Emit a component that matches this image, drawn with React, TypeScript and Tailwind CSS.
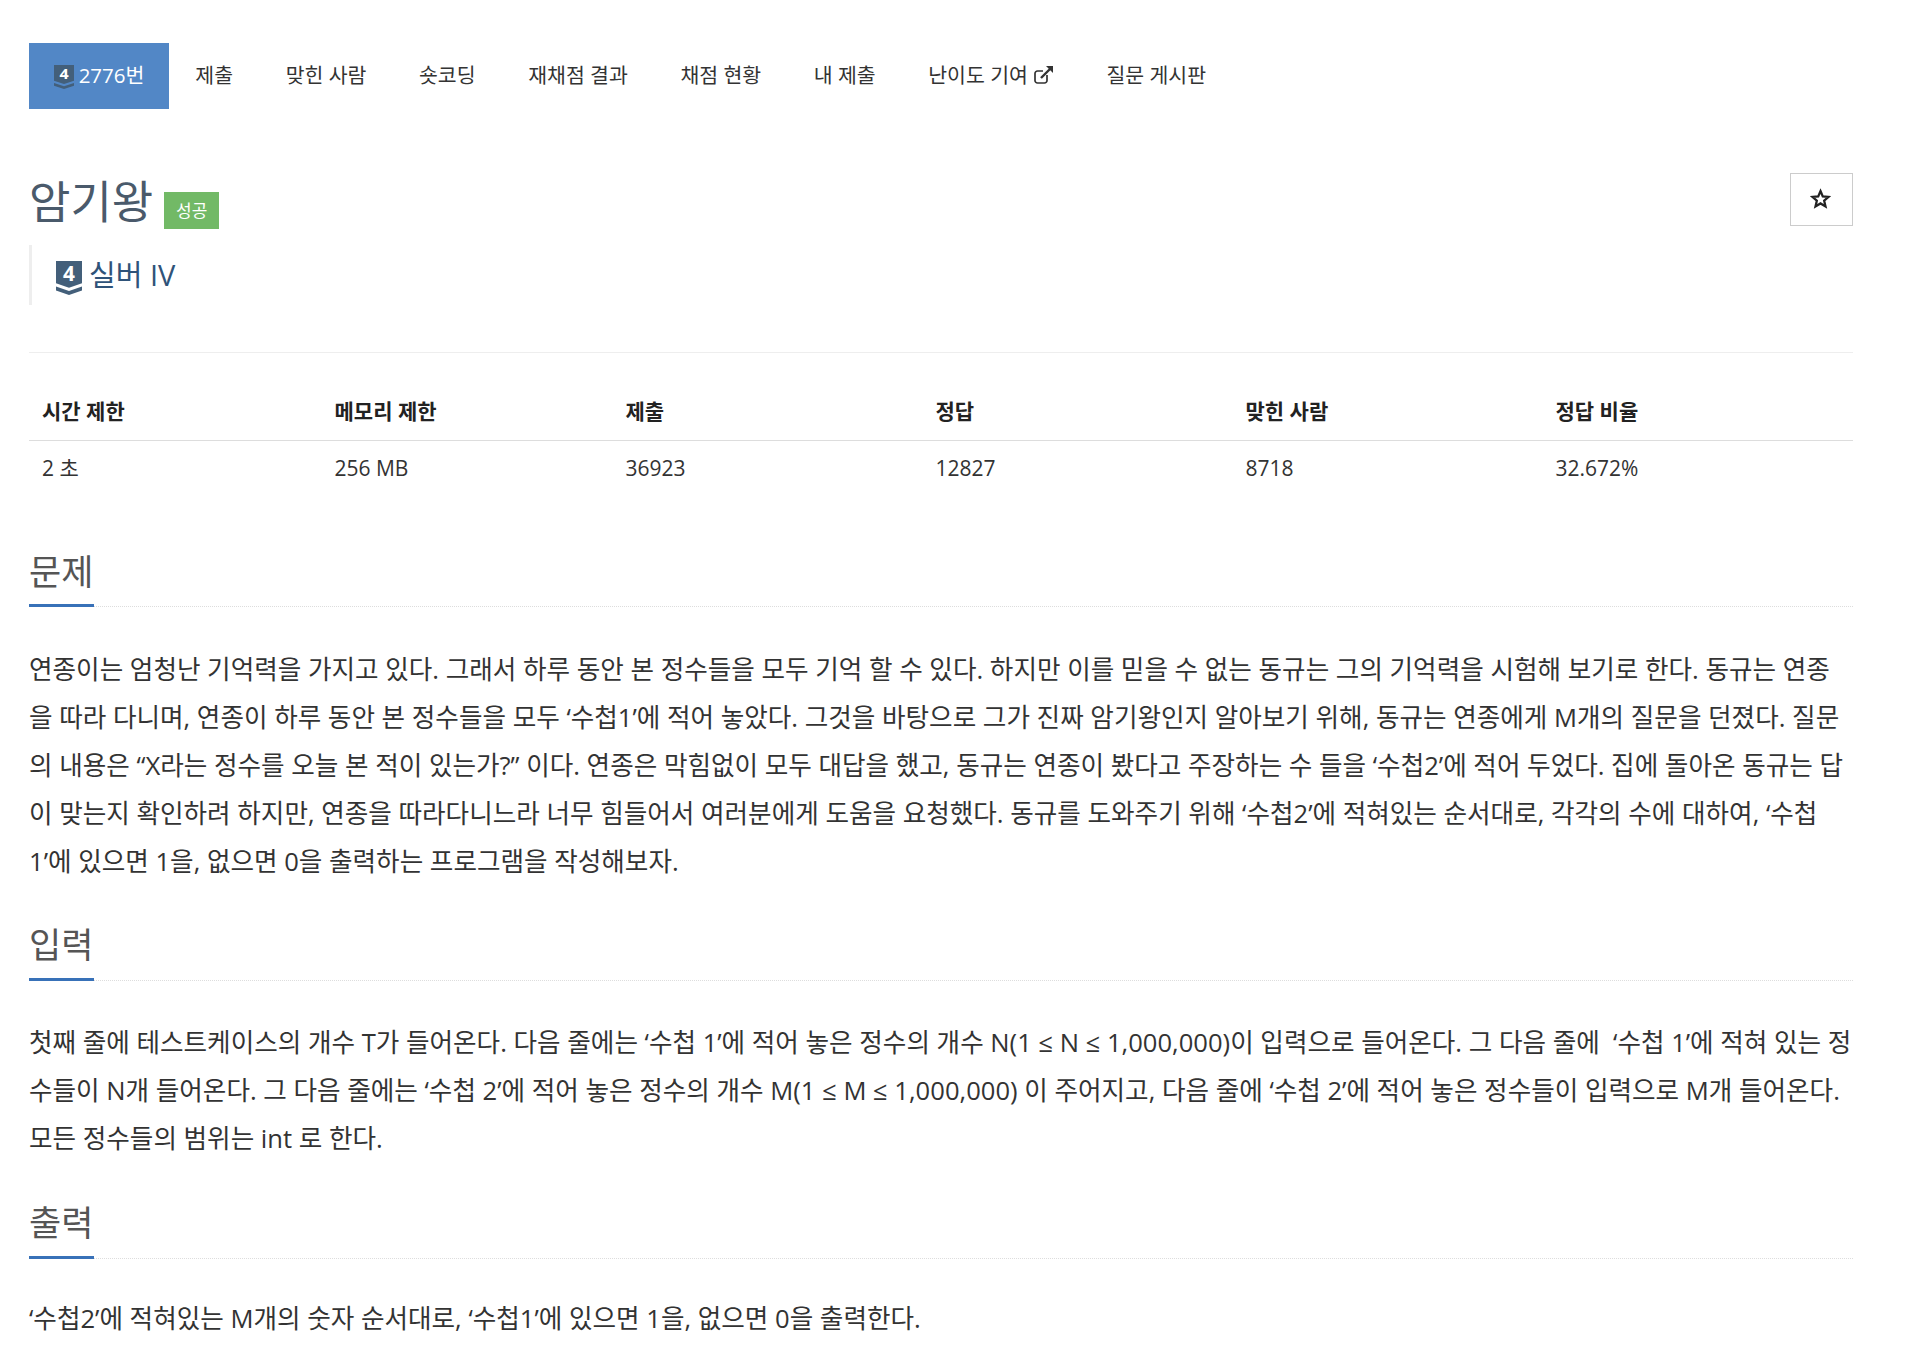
const font = { fontFamily: '"Open Sans","Noto Sans CJK KR",sans-serif' };

function Tier({ w, h, className }: { w: number; h: number; className?: string }) {
  return (
    <svg width={w} height={h} viewBox="0 0 20 26" preserveAspectRatio="none" overflow="visible" className={"shrink-0 " + (className ?? "")}>
      <path d="M0 0H20V17L10 20.5L0 17Z" fill="#435f7a" />
      <path d="M0 19.5L10 23L20 19.5V22.5L10 26L0 22.5Z" fill="#435f7a" />
      <text x="10" y="15.5" textAnchor="middle" fontSize="16" fontWeight="700" fill="#fff" fontFamily="Open Sans">4</text>
    </svg>
  );
}

const nav = ["제출", "맞힌 사람", "숏코딩", "재채점 결과", "채점 현황", "내 제출"];

function Section({ title, lines, headClass, bodyClass }: { title: string; lines: string[]; headClass: string; bodyClass: string }) {
  return (
    <section>
      <div className="h-[58px] border-b border-dotted border-[#dddddd]">
        <h2 className={"h-[58px] w-[65px] whitespace-nowrap border-b-[3px] border-[#3871b8] text-[35px] font-normal text-[#555555] " + headClass}>
          {title}
        </h2>
      </div>
      <div className={"text-[25.6px] leading-[48px] text-[#333333] " + bodyClass}>
        {lines.map((l) => (
          <div key={l} className="h-[48px] whitespace-pre">{l}</div>
        ))}
      </div>
    </section>
  );
}

export default function App() {
  return (
    <div style={font} className="h-[1350px] w-[1922px] overflow-hidden bg-white pl-[29px] pr-[69px] pt-[43px] text-[#333333]">
      <nav className="flex h-[66px] items-center text-[20.5px] text-[#333333]">
        <div className="flex h-[66px] w-[140px] items-center justify-center gap-[5px] bg-[#5287c6] pb-[2px] text-white">
          <Tier w={20} h={24} className="mt-[3px]" />
          <span>2776번</span>
        </div>
        {nav.map((n) => (
          <span key={n} className="whitespace-nowrap px-[26.3px] pb-[2px]">{n}</span>
        ))}
        <span className="flex items-center gap-[6px] whitespace-nowrap px-[26.3px] pb-[2px]">
          난이도 기여
          <svg width="20" height="20" viewBox="0 0 20 20" fill="none" stroke="#333" strokeWidth="2">
            <path d="M13 10V15.5a2.5 2.5 0 0 1-2.5 2.5H3.5A2.5 2.5 0 0 1 1 15.5V8.5A2.5 2.5 0 0 1 3.5 6H9" strokeWidth="1.7" />
            <path d="M7 13L16 4" strokeWidth="2.4" />
            <path d="M12 1H19V8Z" fill="#333" stroke="none" />
          </svg>
        </span>
        <span className="whitespace-nowrap px-[26.3px] pb-[2px]">질문 게시판</span>
      </nav>

      <div className="flex items-start justify-between pt-[64px]">
        <div className="flex h-[53px] items-end">
          <h1 className="relative top-[2px] text-[45px] leading-[53px] font-normal text-[#4a5a6b]">암기왕</h1>
          <span className="mb-[-3px] ml-[11px] flex h-[37px] w-[55px] items-center justify-center bg-[#72b966] text-[17px] text-white">성공</span>
        </div>
        <button className="flex h-[53px] w-[63px] items-center justify-center border border-[#cccccc] bg-white pb-[3px] pr-[2px]">
          <svg width="21" height="21" viewBox="0 0 24 24" fill="none" stroke="#222" strokeWidth="2.6">
            <path d="M12 3.5L14.6 9.6L21.2 10.2L16.2 14.5L17.7 21L12 17.6L6.3 21L7.8 14.5L2.8 10.2L9.4 9.6Z" />
          </svg>
        </button>
      </div>

      <div className="mt-[19px] flex h-[60px] items-center gap-[7px] border-l-[3px] border-[#eeeeee] pl-[24px] text-[29px] text-[#2f5379]">
        <Tier w={26} h={34} className="mt-[6px]" />
        <span>실버 IV</span>
      </div>

      <div className="mt-[47px] border-t border-[#eeeeee]" />

      <table className="mt-[29px] w-full table-fixed border-collapse text-left text-[21px] text-[#333333]">
        <colgroup>
          <col className="w-[292.5px]" />
          <col className="w-[291px]" />
          <col className="w-[310px]" />
          <col className="w-[310px]" />
          <col className="w-[310px]" />
          <col />
        </colgroup>
        <thead>
          <tr className="border-b border-[#dddddd]">
            {["시간 제한", "메모리 제한", "제출", "정답", "맞힌 사람", "정답 비율"].map((h) => (
              <th key={h} className="h-[58px] pl-[13px] pt-[2px] font-bold text-[#222222]">{h}</th>
            ))}
          </tr>
        </thead>
        <tbody>
          <tr>
            {["2 초", "256 MB", "36923", "12827", "8718", "32.672%"].map((c) => (
              <td key={c} className="h-[56px] pl-[13px]">{c}</td>
            ))}
          </tr>
        </tbody>
      </table>

      <div className="pt-[53px]">
        <Section
          title="문제"
          headClass="leading-[46px]"
          bodyClass="pt-[38.5px] pb-[37.5px]"
          lines={[
            "연종이는 엄청난 기억력을 가지고 있다. 그래서 하루 동안 본 정수들을 모두 기억 할 수 있다. 하지만 이를 믿을 수 없는 동규는 그의 기억력을 시험해 보기로 한다. 동규는 연종",
            "을 따라 다니며, 연종이 하루 동안 본 정수들을 모두 ‘수첩1’에 적어 놓았다. 그것을 바탕으로 그가 진짜 암기왕인지 알아보기 위해, 동규는 연종에게 M개의 질문을 던졌다. 질문",
            "의 내용은 “X라는 정수를 오늘 본 적이 있는가?” 이다. 연종은 막힘없이 모두 대답을 했고, 동규는 연종이 봤다고 주장하는 수 들을 ‘수첩2’에 적어 두었다. 집에 돌아온 동규는 답",
            "이 맞는지 확인하려 하지만, 연종을 따라다니느라 너무 힘들어서 여러분에게 도움을 요청했다. 동규를 도와주기 위해 ‘수첩2’에 적혀있는 순서대로, 각각의 수에 대하여, ‘수첩",
            "1’에 있으면 1을, 없으면 0을 출력하는 프로그램을 작성해보자.",
          ]}
        />
        <Section
          title="입력"
          headClass="leading-[43px]"
          bodyClass="pt-[37.5px] pb-[38.5px]"
          lines={[
            "첫째 줄에 테스트케이스의 개수 T가 들어온다. 다음 줄에는 ‘수첩 1’에 적어 놓은 정수의 개수 N(1 ≤ N ≤ 1,000,000)이 입력으로 들어온다. 그 다음 줄에  ‘수첩 1’에 적혀 있는 정",
            "수들이 N개 들어온다. 그 다음 줄에는 ‘수첩 2’에 적어 놓은 정수의 개수 M(1 ≤ M ≤ 1,000,000) 이 주어지고, 다음 줄에 ‘수첩 2’에 적어 놓은 정수들이 입력으로 M개 들어온다.",
            "모든 정수들의 범위는 int 로 한다.",
          ]}
        />
        <Section
          title="출력"
          headClass="leading-[43px]"
          bodyClass="pt-[36px]"
          lines={["‘수첩2’에 적혀있는 M개의 숫자 순서대로, ‘수첩1’에 있으면 1을, 없으면 0을 출력한다."]}
        />
      </div>
    </div>
  );
}
